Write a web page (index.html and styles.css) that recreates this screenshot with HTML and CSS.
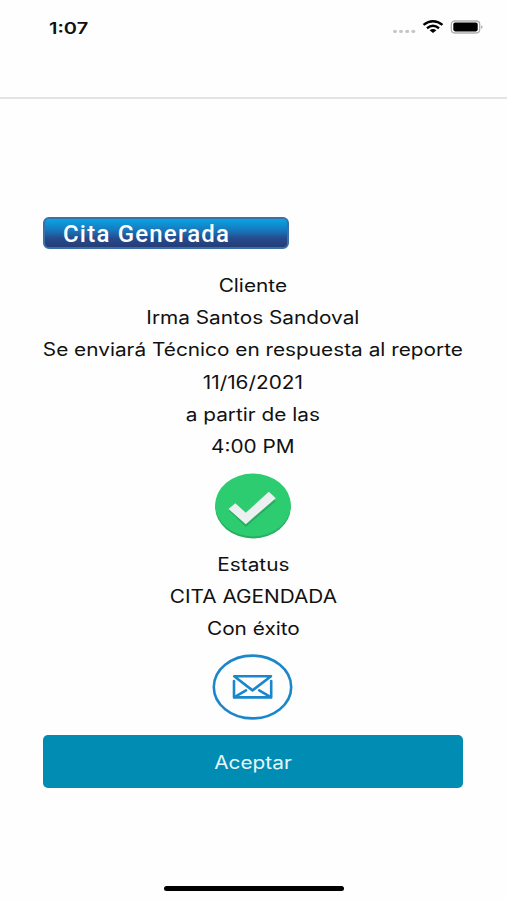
FILE: index.html
```html
<!DOCTYPE html>
<html lang="es">
<head>
    <meta charset="UTF-8">
    <meta name="viewport" content="width=device-width, initial-scale=1.0">
    <title>Cita Generada</title>
    <link rel="stylesheet" href="styles.css">
</head>
<body>
    <div id="container">

        <header>
            <span class="time">1:07</span>
            <svg class="statusIcons" width="92" height="16" viewBox="0 0 92 16">
                <g fill="#c6c6c6">
                    <ellipse cx="3" cy="12.4" rx="2" ry="1.7"/>
                    <ellipse cx="9" cy="12.4" rx="2" ry="1.7"/>
                    <ellipse cx="15.2" cy="12.4" rx="2" ry="1.7"/>
                    <ellipse cx="21.3" cy="12.4" rx="2" ry="1.7"/>
                </g>
                <g fill="none" stroke="#000" stroke-width="2.4">
                    <path d="M31.5 5.9 Q41 -1.4 50.5 5.9"/>
                    <path d="M35 9.2 Q41 4.4 47 9.2"/>
                </g>
                <path d="M37.6 11.2 Q41 8.8 44.4 11.2 L41 13.9 Z"/>
                <rect x="59.3" y="2" width="28.4" height="12" rx="3.4" fill="#fff" stroke="#b0b0b0" stroke-width="1.3"/>
                <rect x="61.3" y="3.6" width="24.4" height="8.8" rx="1.8"/>
                <path d="M89.4 6.2 Q91.6 8 89.4 9.8 Z" fill="#888"/>
            </svg>
        </header>

        <main>
            <h1>Cita Generada</h1>

            <section class="details">
                <p>Cliente</p>
                <p>Irma Santos Sandoval</p>
                <p>Se enviará Técnico en respuesta al reporte</p>
                <p>11/16/2021</p>
                <p>a partir de las</p>
                <p>4:00 PM</p>
            </section>

            <svg class="checkIcon" width="78" height="66" viewBox="0 0 78 66">
                <ellipse cx="39" cy="34" rx="37.8" ry="31.4" fill="#27ae60"/>
                <ellipse cx="39" cy="32" rx="37.8" ry="31.4" fill="#2ecc71"/>
                <path d="M14.5 37.3 L20.5 33 L31.8 43 L54.8 21.8 L61.8 28.2 L31.8 54 Z" fill="#27ae60"/>
                <path d="M14.5 36 L21.3 30.2 L31.8 39.8 L54.8 18.8 L61.8 25.2 L31.8 51.2 Z" fill="#ecf0f1"/>
            </svg>

            <section class="details">
                <p>Estatus</p>
                <p>CITA AGENDADA</p>
                <p>Con éxito</p>
            </section>

            <svg class="mailIcon" width="82" height="68" viewBox="0 0 82 68" fill="none" stroke="#1b87cb" stroke-width="2.6" stroke-linecap="round" stroke-linejoin="round">
                <ellipse cx="40.5" cy="34" rx="38.7" ry="31.4"/>
                <path d="M22 28 V44.4 H59.2 V28"/>
                <path d="M22.2 23.2 H59 L40.5 37.4 Z"/>
                <path d="M22.5 44.2 L34 37.4 M58.7 44.2 L47.2 37.4"/>
            </svg>

            <button type="button"><span>Aceptar</span></button>
        </main>

        <footer>
            <div class="homeBar"></div>
        </footer>

    </div>
</body>
</html>
```
FILE: styles.css
```css
* {
    box-sizing: border-box;
}

body {
    margin: 0;
    background-color: #fefefe;
    color: #111;
    font-family: Inter, "Liberation Sans", sans-serif;
}

#container {
    display: flex;
    flex-direction: column;
    height: 900px;
    overflow: hidden;
}

header {
    display: flex;
    justify-content: space-between;
    height: 99px;
    padding: 19px 23px 0 49px;
    border-bottom: 2px solid #e3e3e3;
}

.time {
    font-size: 16px;
    font-weight: 600;
    line-height: 18px;
    transform: scaleX(1.25);
    transform-origin: left;
    height: 18px;
}

main {
    display: flex;
    flex-direction: column;
    align-items: center;
    padding: 118px 44px 0 43px;
}

h1 {
    align-self: flex-start;
    width: 246px;
    height: 32px;
    margin: 0 0 21px;
    padding-left: 18px;
    border: 2px solid #3a70a8;
    border-radius: 6px;
    background: linear-gradient(#08a5e3, #1778bd 40%, #254a8c 70%, #263d78);
    color: #fff;
    font-family: Roboto, sans-serif;
    font-size: 24px;
    font-weight: 500;
    letter-spacing: 1.2px;
    line-height: 31px;
}

/* wide lettering */
.details p,
button span {
    display: block;
    margin: 0;
    font-size: 18px;
    line-height: 32.2px;
    text-align: center;
    white-space: nowrap;
    transform: scaleX(1.155);
}

.checkIcon {
    margin: 9.8px 0 10px;
}

.mailIcon {
    margin: 7.3px 0 14px;
}

button {
    width: 420px;
    height: 53px;
    padding: 3px 0 0;
    border: none;
    border-radius: 5px;
    background-color: #008cb3;
    color: #e6f7fb;
    font-family: inherit;
}

footer {
    display: flex;
    justify-content: center;
    margin-top: auto;
    padding-bottom: 9px;
}

.homeBar {
    width: 180px;
    height: 5px;
    border-radius: 3px;
    background-color: #000;
}
```
